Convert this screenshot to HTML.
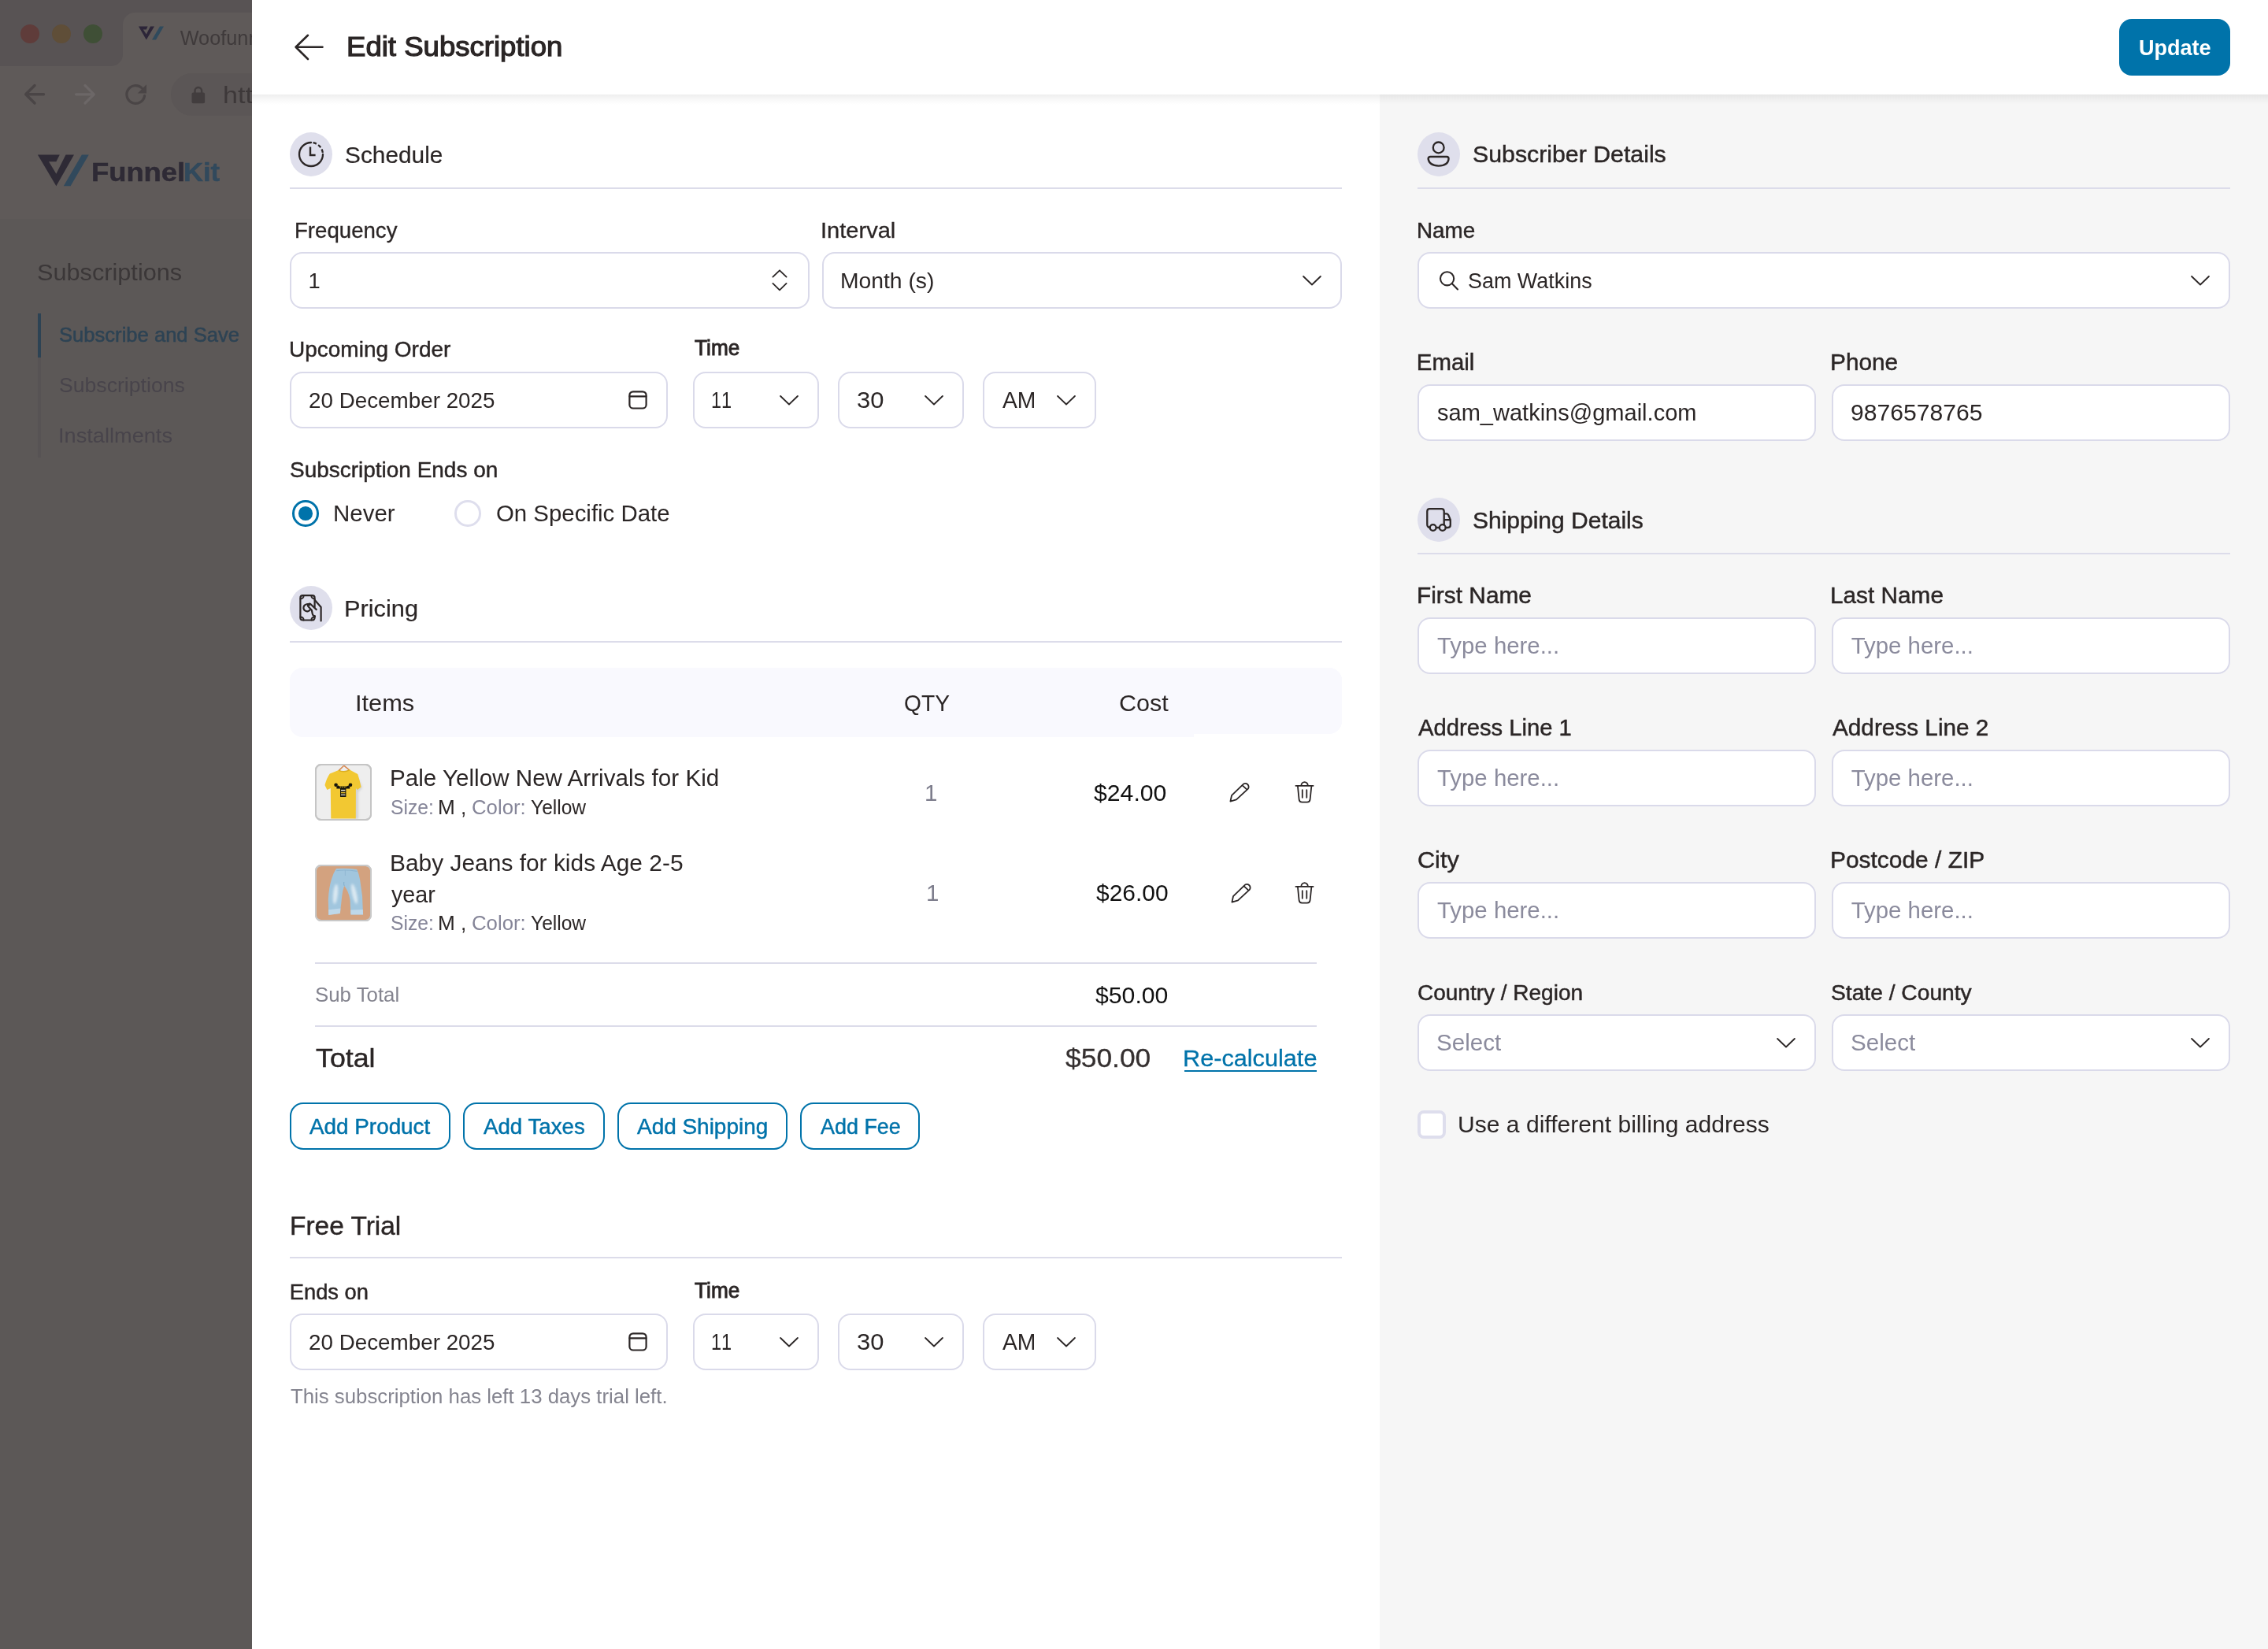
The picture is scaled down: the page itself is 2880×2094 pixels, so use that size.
<!DOCTYPE html>
<html lang="en"><head><meta charset="utf-8"><title>Edit Subscription</title>
<style>
html,body{margin:0;padding:0}
body{width:2880px;height:2094px;position:relative;overflow:hidden;background:#5c5857;font-family:"Liberation Sans",sans-serif}
@media (max-width:1600px){html{zoom:.5}}
.a{position:absolute}
svg{position:absolute;overflow:visible}
.t{position:absolute;white-space:nowrap;line-height:1;transform-origin:0 50%;-webkit-font-smoothing:antialiased}
.inp{position:absolute;box-sizing:border-box;height:72px;border:2px solid #dadaea;border-radius:16px;background:#fff}
.hr{position:absolute;height:2px;background:#dcdcea}
.ic{position:absolute;width:54px;height:56px;border-radius:50%;background:#dfdfec}
.btn{position:absolute;box-sizing:border-box;height:60px;top:1400px;border:2.5px solid #0073aa;border-radius:17px;background:#fff}
.k{fill:none;stroke:#2b2626;stroke-linecap:round;stroke-linejoin:round}
</style></head><body>

<!-- ================= dimmed browser / app behind the drawer ================= -->
<div class="a" style="left:0;top:0;width:320px;height:84px;background:#585354"></div>
<div class="a" style="left:0;top:84px;width:320px;height:194px;background:#5f5a59"></div>
<div class="a" style="left:156px;top:16px;width:170px;height:70px;background:#5f5a59;border-radius:15px 0 0 0"></div>
<svg style="left:141px;top:69px" width="15" height="15" viewBox="0 0 15 15"><path d="M15 0 V15 H0 A15 15 0 0 0 15 0Z" fill="#5f5a59"/></svg>
<div class="a" style="left:217px;top:93px;width:140px;height:54px;border-radius:27px;background:#5b5656"></div>
<div class="a" style="left:26px;top:31px;width:24px;height:24px;border-radius:50%;background:#5f3c3a"></div>
<div class="a" style="left:66px;top:31px;width:24px;height:24px;border-radius:50%;background:#5f4e38"></div>
<div class="a" style="left:106px;top:31px;width:24px;height:24px;border-radius:50%;background:#3f4f36"></div>
<!-- favicon -->
<svg style="left:176px;top:33px" width="33" height="19" viewBox="0 0 33 19">
<path d="M0 .6H20L9.8 17.6Z M11.6 .6H15L9.8 10.6 5.8 4.4H9.8Z" fill="#2c2538" fill-rule="evenodd"/>
<path d="M27 .6H32L22 17.6H17Z" fill="#2f4a5d"/></svg>
<!-- nav arrows, reload, lock -->
<svg style="left:28px;top:104px" width="100" height="32" viewBox="28 104 100 32">
<path d="M55.5 119.8H33 M44 108.5 32.7 119.8 44 131" fill="none" stroke="#4a4546" stroke-width="3.4" stroke-linecap="round" stroke-linejoin="round"/>
<path d="M96.5 119.8H119 M108 108.5 119.3 119.8 108 131" fill="none" stroke="#6c6767" stroke-width="3.2" stroke-linecap="round" stroke-linejoin="round"/></svg>
<svg style="left:156px;top:104px" width="34" height="34" viewBox="156 104 34 34">
<path d="M183.6 121.5A11.4 11.4 0 1 1 180 111.6" fill="none" stroke="#4a4546" stroke-width="3.2" stroke-linecap="round"/>
<path d="M186 107.3V118.6H174.8Z" fill="#4a4546"/></svg>
<svg style="left:243px;top:109px" width="18" height="23" viewBox="0 0 18 23">
<rect x=".5" y="8.6" width="16.6" height="13.6" rx="2" fill="#423d3e"/>
<path d="M4.5 9.5V6.3a4.3 4.3 0 0 1 8.6 0V9.5" fill="none" stroke="#423d3e" stroke-width="2.4"/></svg>
<!-- FunnelKit logo mark -->
<svg style="left:47px;top:196px" width="68" height="42" viewBox="47 196 68 42">
<path d="M47.9 196.4H94L71.4 236.3Z M75.8 196.4H83.5L71.4 220.8 62 205.2H71.4Z" fill="#2e2a35" fill-rule="evenodd"/>
<path d="M103.9 196.4H112.8L89.6 236.3H80.8Z" fill="#31495c"/></svg>
<!-- sidebar rail -->
<div class="a" style="left:48px;top:398px;width:4px;height:183px;background:#575354"></div>
<div class="a" style="left:48px;top:398px;width:4px;height:56px;background:#2d4354"></div>

<div class="a" style="left:0;top:0;width:320px;height:2094px;overflow:hidden;will-change:transform">
<div class="t" style="left:228.70px;top:36.48px;font-size:25.3px;color:#3f3a3b;">Woofunnels</div>
<div class="t" style="left:282.70px;top:106.65px;font-size:29.0px;color:#3d3839;transform:scaleX(1.1746);">htt</div>
<div class="t" style="left:116.10px;top:202.07px;font-size:33.0px;color:#2e2a35;font-weight:700;transform:scaleX(1.1011);-webkit-text-stroke:0.5px #2e2a35;">Funnel</div>
<div class="t" style="left:232.50px;top:202.07px;font-size:33.0px;color:#31495c;font-weight:700;transform:scaleX(1.0476);-webkit-text-stroke:0.5px #31495c;">Kit</div>
<div class="t" style="left:47.34px;top:332.45px;font-size:29.0px;color:#3b3738;transform:scaleX(1.0580);">Subscriptions</div>
<div class="t" style="left:75.42px;top:411.59px;font-size:26.0px;color:#2d4354;transform:scaleX(0.9842);-webkit-text-stroke:0.5px #2d4354;">Subscribe and Save</div>
<div class="t" style="left:75.38px;top:475.99px;font-size:26.0px;color:#48444b;transform:scaleX(1.0240);">Subscriptions</div>
<div class="t" style="left:74.31px;top:539.59px;font-size:26.0px;color:#48444b;transform:scaleX(1.0452);">Installments</div>
</div>

<!-- ================= drawer ================= -->
<div class="a" style="left:320px;top:0;width:1432px;height:2094px;background:#fff"></div>
<div class="a" style="left:1752px;top:0;width:1128px;height:2094px;background:#f6f6f6"></div>
<div class="a" style="left:320px;top:120px;width:2560px;height:13px;background:linear-gradient(rgba(0,0,0,.068),rgba(0,0,0,.025) 55%,rgba(0,0,0,0))"></div>
<div class="a" style="left:320px;top:0;width:2560px;height:120px;background:#fff"></div>
<svg style="left:370px;top:40px" width="44" height="40" viewBox="370 40 44 40"><path class="k" d="M409.5 59.8H376 M391 44.8 375.6 59.8 391 75" stroke-width="2.6"/></svg>
<div class="a" style="left:2691px;top:24px;width:141px;height:72px;border-radius:16px;background:#0073aa"></div>

<!-- ===== left column: schedule ===== -->
<div class="ic" style="left:368px;top:168px"></div>
<svg style="left:375px;top:176px" width="40" height="40" viewBox="375 176 40 40">
<path class="k" d="M410 196A15 15 0 1 1 395 181" stroke-width="2.3"/>
<path class="k" d="M395 181A15 15 0 0 1 410 196" stroke-width="2.3" stroke-dasharray="4.4 2.65" stroke-dashoffset="4.4" style="stroke-linecap:butt"/>
<path class="k" d="M394 186.6V197H400.6" stroke-width="2.4" style="stroke-linecap:butt;stroke-linejoin:miter"/></svg>
<div class="hr" style="left:368px;top:238px;width:1336px"></div>

<div class="inp" style="left:368px;top:320px;width:660px"></div>
<svg style="left:979px;top:341px" width="22" height="30" viewBox="979 341 22 30"><path class="k" d="M981.4 351.6 990 343.3 998.6 351.6 M981.4 359.9 990 368.4 998.6 359.9" stroke-width="1.8"/></svg>
<div class="inp" style="left:1044px;top:320px;width:660px"></div>
<svg style="left:1654px;top:349.8px" width="24" height="13" viewBox="0 0 24 13"><path class="k" d="M1.1 1 12 11.5 22.9 1" stroke-width="1.85"/></svg>

<div class="inp" style="left:368px;top:472px;width:480px"></div>
<svg style="left:797px;top:495px" width="26" height="26" viewBox="797 495 26 26"><rect class="k" x="799.4" y="497.3" width="21.2" height="21.2" rx="4.6" stroke-width="2.2"/><path class="k" d="M799.6 503.4H820.4" stroke-width="2.2"/></svg>
<div class="inp" style="left:880px;top:472px;width:160px"></div>
<svg style="left:990px;top:501.8px" width="24" height="13" viewBox="0 0 24 13"><path class="k" d="M1.1 1 12 11.5 22.9 1" stroke-width="1.85"/></svg>
<div class="inp" style="left:1064px;top:472px;width:160px"></div>
<svg style="left:1174.4px;top:501.8px" width="24" height="13" viewBox="0 0 24 13"><path class="k" d="M1.1 1 12 11.5 22.9 1" stroke-width="1.85"/></svg>
<div class="inp" style="left:1248px;top:472px;width:144px"></div>
<svg style="left:1342px;top:501.8px" width="24" height="13" viewBox="0 0 24 13"><path class="k" d="M1.1 1 12 11.5 22.9 1" stroke-width="1.85"/></svg>

<!-- radios -->
<div class="a" style="left:371.3px;top:635.3px;width:33.4px;height:33.4px;box-sizing:border-box;border:3.7px solid #0073aa;border-radius:50%;background:#fff"></div>
<div class="a" style="left:379.2px;top:643.2px;width:17.6px;height:17.6px;border-radius:50%;background:#0073aa"></div>
<div class="a" style="left:577.3px;top:635.3px;width:33.4px;height:33.4px;box-sizing:border-box;border:3.5px solid #dedeed;border-radius:50%;background:#fff"></div>

<!-- ===== pricing ===== -->
<div class="ic" style="left:368px;top:744px"></div>
<svg style="left:376px;top:750px" width="40" height="44" viewBox="376 750 40 44">
<path class="k" d="M399.6 771V759.2a3 3 0 0 0-3-3H384.4a3 3 0 0 0-3 3V784.5a3 3 0 0 0 3 3H396.6a3 3 0 0 0 3-3V782.6" stroke-width="2.2"/>
<path class="k" d="M381.6 760.4a4 4 0 0 0 4-4 M395.4 756.4a4 4 0 0 0 4 4 M381.6 783.4a4 4 0 0 1 4 4 M395.4 787.4a4 4 0 0 1 4-4" stroke-width="2"/>
<path class="k" d="M392.96 768.28A4.6 4.6 0 1 0 393.77 774.44" stroke-width="2.2"/>
<path class="k" d="M401.8 774.1 394.5 767.2A2.13 2.13 0 0 0 391.6 770.3L395.9 775 396.8 779.6Q397.3 782 400 782.4" stroke-width="2.2"/>
<path class="k" d="M399.8 762 407.6 771V788.4" stroke-width="2.2"/></svg>
<div class="hr" style="left:368px;top:813.6px;width:1336px"></div>

<div class="a" style="left:368px;top:848px;width:1336px;height:88px;border-radius:16px;background:#f9f9fe"></div>
<div class="a" style="left:1516px;top:920px;width:188px;height:16px;background:#fff"></div>
<div class="a" style="left:1516px;top:848px;width:188px;height:84px;border-radius:0 16px 16px 0;background:#f9f9fe"></div>

<!-- thumbnails -->
<svg style="left:400px;top:970px" width="72" height="72" viewBox="0 0 72 72">
<defs><filter id="bl1" x="-30%" y="-30%" width="160%" height="160%"><feGaussianBlur stdDeviation="1.6"/></filter>
<filter id="bl0" x="-30%" y="-30%" width="160%" height="160%"><feGaussianBlur stdDeviation=".45"/></filter>
<clipPath id="tc"><rect x="2" y="2" width="68" height="68" rx="5.5"/></clipPath></defs>
<rect x="1" y="1" width="70" height="70" rx="6.6" fill="#eeeeee" stroke="#c5c5c5" stroke-width="2"/>
<g clip-path="url(#tc)">
<path d="M53 14 60 30 55 36 55 70H50V14Z" fill="#d3d3d3" filter="url(#bl1)"/>
<g filter="url(#bl0)">
<path d="M30.4 8.4 36.7 2.2 43.6 7.8" fill="none" stroke="#d8874f" stroke-width="1.5" stroke-linecap="round" stroke-linejoin="round"/>
<path d="M30 8.1Q36.7 11.6 44 7.6L54.2 13Q56.6 20 58.6 29.5L53.7 32.9 51.9 30.8 51.8 69.6H20.3L19.8 30.9 15.4 32.9 12.5 27Q14.8 18 18.8 12.5Z" fill="#f2c830"/>
<path d="M30 8.1Q36.7 11.6 44 7.6" fill="none" stroke="#dcae22" stroke-width="1.3"/>
<path d="M27.4 28.4H44.2V31.6H39.4V42H32V31.6H27.4Z" fill="#14120b"/>
<circle cx="26.6" cy="26.8" r="2.3" fill="#14120b"/><circle cx="45" cy="26.8" r="2.3" fill="#14120b"/>
<path d="M28.6 28 31 30 M43 28 40.6 30" stroke="#14120b" stroke-width="2"/>
<path d="M33 33.6H38.4" stroke="#e9e4d0" stroke-width="1.5"/><path d="M33 36.6H38.4" stroke="#e3bd2c" stroke-width="1.5"/><path d="M33 39.4H38.4" stroke="#e9e4d0" stroke-width="1.3"/>
<path d="M31.6 29.7H40" stroke="#f2c830" stroke-width=".9" stroke-dasharray="1.6 1.1"/>
</g></g>
<rect x="1" y="1" width="70" height="70" rx="6.6" fill="none" stroke="#c5c5c5" stroke-width="2"/></svg>
<svg style="left:400px;top:1098px" width="72" height="72" viewBox="0 0 72 72">
<defs><filter id="bl2" x="-40%" y="-20%" width="180%" height="140%"><feGaussianBlur stdDeviation="1.5"/></filter>
<clipPath id="jc"><rect x="2" y="2" width="68" height="68" rx="5.5"/></clipPath></defs>
<rect x="1" y="1" width="70" height="70" rx="6.6" fill="#d3a27f" stroke="#c8c8c8" stroke-width="2"/>
<g clip-path="url(#jc)"><g filter="url(#bl0)">
<path d="M27 5Q40 4 53.2 6Q56 12 57.1 19.1L60 39.5 61 63.3 45.5 63.3 44.5 44.3Q42.5 33 37.2 26.9 35.2 32 34.3 39.5L31.9 61.8 17.3 63.7 16.8 44.3Q17.6 29 21.2 17.7 23.6 10 27 5Z" fill="#a1c6de"/>
<path d="M17.2 57.2 32.3 55.6 31.9 62 17.3 63.9Z M45.2 57.6 60.8 57 61.1 63.4 45.5 63.5Z" fill="#bed8ea"/>
<path d="M27.2 7.6Q40 6.2 53.4 8.4" fill="none" stroke="#8db5d1" stroke-width="1.1"/>
<path d="M38.4 7V14" stroke="#8db5d1" stroke-width=".8"/>
<path d="M37.2 26.9Q36.2 24.6 36.8 22" fill="none" stroke="#7ea9c7" stroke-width=".9"/>
</g>
<ellipse cx="26" cy="37.4" rx="2.9" ry="12.6" transform="rotate(6 26 37.4)" fill="#e6f0f6" opacity=".85" filter="url(#bl2)"/>
<ellipse cx="50" cy="37" rx="2.9" ry="13" transform="rotate(-13 50 37)" fill="#e6f0f6" opacity=".85" filter="url(#bl2)"/>
</g>
<rect x="1" y="1" width="70" height="70" rx="6.6" fill="none" stroke="#c8c8c8" stroke-width="2"/></svg>

<!-- row action icons -->
<svg style="left:1558px;top:990px" width="32" height="32" viewBox="1558 990 32 32"><path class="k" d="M1562.4 1017.6 1564 1010.2 1578.2 996.4A4.2 4.2 0 0 1 1584.6 1001.9L1570 1015.4Z M1578 997.6 1582.6 1001.8" stroke-width="1.8"/></svg>
<svg style="left:1642px;top:990px" width="30" height="32" viewBox="1642 990 30 32"><path class="k" d="M1645.4 997.8H1667.6 M1652.4 997.6A4.2 4.4 0 0 1 1660.8 997.6 M1647.9 998 1649.6 1015.2Q1650 1018.6 1653.4 1018.6H1659.8Q1663.2 1018.6 1663.6 1015.2L1665.4 998 M1653.8 1003.2V1012.8 M1659.3 1003.2V1012.8" stroke-width="1.8"/></svg>
<svg style="left:1559.5px;top:1118px" width="32" height="32" viewBox="1558 990 32 32"><path class="k" d="M1562.4 1017.6 1564 1010.2 1578.2 996.4A4.2 4.2 0 0 1 1584.6 1001.9L1570 1015.4Z M1578 997.6 1582.6 1001.8" stroke-width="1.8"/></svg>
<svg style="left:1642px;top:1118px" width="30" height="32" viewBox="1642 990 30 32"><path class="k" d="M1645.4 997.8H1667.6 M1652.4 997.6A4.2 4.4 0 0 1 1660.8 997.6 M1647.9 998 1649.6 1015.2Q1650 1018.6 1653.4 1018.6H1659.8Q1663.2 1018.6 1663.6 1015.2L1665.4 998 M1653.8 1003.2V1012.8 M1659.3 1003.2V1012.8" stroke-width="1.8"/></svg>

<div class="hr" style="left:400px;top:1222px;width:1272px"></div>
<div class="hr" style="left:400px;top:1301.6px;width:1272px"></div>
<div class="a" style="left:1504px;top:1359px;width:168px;height:2px;background:#0073aa"></div>

<div class="btn" style="left:368px;width:204px"></div>
<div class="btn" style="left:588px;width:180px"></div>
<div class="btn" style="left:784px;width:216px"></div>
<div class="btn" style="left:1016px;width:152px"></div>

<!-- ===== free trial ===== -->
<div class="hr" style="left:368px;top:1595.6px;width:1336px"></div>
<div class="inp" style="left:368px;top:1668px;width:480px"></div>
<svg style="left:797px;top:1691px" width="26" height="26" viewBox="797 495 26 26"><rect class="k" x="799.4" y="497.3" width="21.2" height="21.2" rx="4.6" stroke-width="2.2"/><path class="k" d="M799.6 503.4H820.4" stroke-width="2.2"/></svg>
<div class="inp" style="left:880px;top:1668px;width:160px"></div>
<svg style="left:990px;top:1697.8px" width="24" height="13" viewBox="0 0 24 13"><path class="k" d="M1.1 1 12 11.5 22.9 1" stroke-width="1.85"/></svg>
<div class="inp" style="left:1064px;top:1668px;width:160px"></div>
<svg style="left:1174.4px;top:1697.8px" width="24" height="13" viewBox="0 0 24 13"><path class="k" d="M1.1 1 12 11.5 22.9 1" stroke-width="1.85"/></svg>
<div class="inp" style="left:1248px;top:1668px;width:144px"></div>
<svg style="left:1342px;top:1697.8px" width="24" height="13" viewBox="0 0 24 13"><path class="k" d="M1.1 1 12 11.5 22.9 1" stroke-width="1.85"/></svg>
<!-- ===== right column ===== -->
<div class="ic" style="left:1800px;top:168px"></div>
<svg style="left:1808px;top:176px" width="40" height="40" viewBox="1808 176 40 40">
<circle class="k" cx="1826.7" cy="187.4" r="6.9" stroke-width="2.3"/>
<path class="k" d="M1816.4 199H1837.2Q1839.7 199.2 1839.6 201.8 1838.6 210.4 1826.8 210.6 1815 210.4 1813.6 201.8 1813.6 199.2 1816.4 199Z" stroke-width="2.3"/></svg>
<div class="hr" style="left:1800px;top:238px;width:1032px"></div>

<div class="inp" style="left:1800px;top:320px;width:1032px"></div>
<svg style="left:1826px;top:342px" width="28" height="28" viewBox="1826 342 28 28"><circle class="k" cx="1837.6" cy="353.8" r="8.6" stroke-width="2.1"/><path class="k" d="M1843.9 360.2 1851 367.4" stroke-width="2.1"/></svg>
<svg style="left:2782px;top:349.8px" width="24" height="13" viewBox="0 0 24 13"><path class="k" d="M1.1 1 12 11.5 22.9 1" stroke-width="1.85"/></svg>

<div class="inp" style="left:1800px;top:488px;width:506px"></div>
<div class="inp" style="left:2326px;top:488px;width:506px"></div>

<div class="ic" style="left:1800px;top:632px"></div>
<svg style="left:1808px;top:640px" width="40" height="40" viewBox="1808 640 40 40">
<path class="k" d="M1816 670Q1812.3 669.6 1812.3 666V649.4Q1812.3 646.2 1815.5 646.2H1830.5Q1833.7 646.2 1833.7 649.4V666.2 M1823.8 670H1827.8 M1835.8 670H1838.6Q1841.8 670 1841.8 666.8V660.8Q1841.8 659.8 1841.4 659L1839.2 654Q1838.4 652.4 1836.6 652.4H1833.9 M1833.9 660.2H1841.6" stroke-width="2.3"/>
<circle class="k" cx="1819.7" cy="670" r="3.9" stroke-width="2.3"/><circle class="k" cx="1831.8" cy="670" r="3.9" stroke-width="2.3"/></svg>
<div class="hr" style="left:1800px;top:701.6px;width:1032px"></div>

<div class="inp" style="left:1800px;top:784px;width:506px"></div>
<div class="inp" style="left:2326px;top:784px;width:506px"></div>
<div class="inp" style="left:1800px;top:952px;width:506px"></div>
<div class="inp" style="left:2326px;top:952px;width:506px"></div>
<div class="inp" style="left:1800px;top:1120px;width:506px"></div>
<div class="inp" style="left:2326px;top:1120px;width:506px"></div>
<div class="inp" style="left:1800px;top:1288px;width:506px"></div>
<div class="inp" style="left:2326px;top:1288px;width:506px"></div>
<svg style="left:2256px;top:1317.8px" width="24" height="13" viewBox="0 0 24 13"><path class="k" d="M1.1 1 12 11.5 22.9 1" stroke-width="1.85"/></svg>
<svg style="left:2782px;top:1317.8px" width="24" height="13" viewBox="0 0 24 13"><path class="k" d="M1.1 1 12 11.5 22.9 1" stroke-width="1.85"/></svg>

<div class="a" style="left:1800px;top:1410px;width:36px;height:36px;box-sizing:border-box;border:4px solid #dedeed;border-radius:8px;background:#fff"></div>


<div class="a" style="left:0;top:0;width:2880px;height:2094px;will-change:transform">
<div class="t" style="left:439.53px;top:42.03px;font-size:35.4px;color:#2b2626;transform:scaleX(1.0333);-webkit-text-stroke:1.25px #2b2626;">Edit Subscription</div>
<div class="t" style="left:2715.61px;top:47.29px;font-size:27.3px;color:#ffffff;font-weight:700;transform:scaleX(0.9898);">Update</div>
<div class="t" style="left:437.99px;top:181.51px;font-size:29.4px;color:#2b2626;transform:scaleX(1.0148);-webkit-text-stroke:0.2px #2b2626;">Schedule</div>
<div class="t" style="left:374.48px;top:278.89px;font-size:27.3px;color:#2b2626;transform:scaleX(1.0116);-webkit-text-stroke:0.3px #2b2626;">Frequency</div>
<div class="t" style="left:1042.37px;top:278.69px;font-size:27.3px;color:#2b2626;transform:scaleX(1.0642);-webkit-text-stroke:0.3px #2b2626;">Interval</div>
<div class="t" style="left:391.50px;top:342.89px;font-size:27.3px;color:#2b2626;">1</div>
<div class="t" style="left:1066.93px;top:342.89px;font-size:27.3px;color:#2b2626;transform:scaleX(1.0358);">Month (s)</div>
<div class="t" style="left:366.55px;top:429.89px;font-size:27.3px;color:#2b2626;transform:scaleX(1.0254);-webkit-text-stroke:0.45px #2b2626;">Upcoming Order</div>
<div class="t" style="left:881.50px;top:428.29px;font-size:27.3px;color:#2b2626;transform:scaleX(0.9613);-webkit-text-stroke:0.9px #2b2626;">Time</div>
<div class="t" style="left:391.98px;top:495.19px;font-size:27.3px;color:#2b2626;transform:scaleX(1.0187);">20 December 2025</div>
<div class="t" style="left:903.40px;top:493.01px;font-size:29.4px;color:#2b2626;transform:scaleX(0.8008);font-kerning:none;">11</div>
<div class="t" style="left:1088.45px;top:493.01px;font-size:29.4px;color:#2b2626;transform:scaleX(1.0528);">30</div>
<div class="t" style="left:1273.00px;top:493.01px;font-size:29.4px;color:#2b2626;transform:scaleX(0.9624);">AM</div>
<div class="t" style="left:367.58px;top:583.29px;font-size:27.3px;color:#2b2626;transform:scaleX(1.0243);-webkit-text-stroke:0.45px #2b2626;">Subscription Ends on</div>
<div class="t" style="left:423.00px;top:637.11px;font-size:29.4px;color:#2b2626;transform:scaleX(1.0025);">Never</div>
<div class="t" style="left:630.00px;top:637.11px;font-size:29.4px;color:#2b2626;font-variant-ligatures:none;">On Specific Date</div>
<div class="t" style="left:436.91px;top:758.11px;font-size:29.4px;color:#2b2626;transform:scaleX(1.0464);-webkit-text-stroke:0.2px #2b2626;">Pricing</div>
<div class="t" style="left:450.61px;top:877.51px;font-size:29.4px;color:#2b2626;transform:scaleX(1.0469);">Items</div>
<div class="t" style="left:1147.64px;top:877.51px;font-size:29.4px;color:#2b2626;transform:scaleX(0.9590);">QTY</div>
<div class="t" style="left:1420.96px;top:877.51px;font-size:29.4px;color:#2b2626;transform:scaleX(1.0377);">Cost</div>
<div class="t" style="left:494.78px;top:973.41px;font-size:29.4px;color:#2b2626;transform:scaleX(1.0079);">Pale Yellow New Arrivals for Kid</div>
<div class="t" style="left:495.92px;top:1012.67px;font-size:25.2px;color:#858598;transform:scaleX(0.9793);">Size:</div>
<div class="t" style="left:556.22px;top:1012.67px;font-size:25.2px;color:#2b2626;transform:scaleX(1.0394);">M ,</div>
<div class="t" style="left:598.58px;top:1012.67px;font-size:25.2px;color:#858598;transform:scaleX(1.0220);">Color:</div>
<div class="t" style="left:673.60px;top:1012.67px;font-size:25.2px;color:#2b2626;transform:scaleX(0.9753);">Yellow</div>
<div class="t" style="left:495.92px;top:1160.47px;font-size:25.2px;color:#858598;transform:scaleX(0.9793);">Size:</div>
<div class="t" style="left:556.22px;top:1160.47px;font-size:25.2px;color:#2b2626;transform:scaleX(1.0394);">M ,</div>
<div class="t" style="left:598.58px;top:1160.47px;font-size:25.2px;color:#858598;transform:scaleX(1.0220);">Color:</div>
<div class="t" style="left:673.60px;top:1160.47px;font-size:25.2px;color:#2b2626;transform:scaleX(0.9753);">Yellow</div>
<div class="t" style="left:1174.00px;top:991.81px;font-size:29.4px;color:#7d7d8c;">1</div>
<div class="t" style="left:1389.00px;top:991.81px;font-size:29.4px;color:#111111;transform:scaleX(1.0274);">$24.00</div>
<div class="t" style="left:494.76px;top:1081.11px;font-size:29.4px;color:#2b2626;transform:scaleX(1.0180);">Baby Jeans for kids Age 2-5</div>
<div class="t" style="left:496.80px;top:1121.11px;font-size:29.4px;color:#2b2626;transform:scaleX(0.9758);">year</div>
<div class="t" style="left:1176.00px;top:1119.11px;font-size:29.4px;color:#7d7d8c;">1</div>
<div class="t" style="left:1391.80px;top:1119.11px;font-size:29.4px;color:#111111;transform:scaleX(1.0184);">$26.00</div>
<div class="t" style="left:399.97px;top:1251.07px;font-size:25.2px;color:#84848f;transform:scaleX(1.0252);">Sub Total</div>
<div class="t" style="left:1391.00px;top:1248.81px;font-size:29.4px;color:#111111;transform:scaleX(1.0274);">$50.00</div>
<div class="t" style="left:401.00px;top:1327.16px;font-size:33.6px;color:#2b2626;transform:scaleX(1.0653);-webkit-text-stroke:0.45px #2b2626;">Total</div>
<div class="t" style="left:1353.40px;top:1327.16px;font-size:33.6px;color:#353030;transform:scaleX(1.0546);-webkit-text-stroke:0.3px #353030;">$50.00</div>
<div class="t" style="left:1501.91px;top:1328.71px;font-size:29.4px;color:#0073aa;transform:scaleX(1.0434);-webkit-text-stroke:0.3px #0073aa;">Re-calculate</div>
<div class="t" style="left:393.30px;top:1416.59px;font-size:27.3px;color:#0073aa;transform:scaleX(1.0203);-webkit-text-stroke:0.45px #0073aa;">Add Product</div>
<div class="t" style="left:613.60px;top:1416.59px;font-size:27.3px;color:#0073aa;transform:scaleX(1.0141);-webkit-text-stroke:0.45px #0073aa;">Add Taxes</div>
<div class="t" style="left:809.40px;top:1416.59px;font-size:27.3px;color:#0073aa;transform:scaleX(1.0235);-webkit-text-stroke:0.45px #0073aa;">Add Shipping</div>
<div class="t" style="left:1041.60px;top:1416.59px;font-size:27.3px;color:#0073aa;transform:scaleX(0.9862);-webkit-text-stroke:0.45px #0073aa;">Add Fee</div>
<div class="t" style="left:368.01px;top:1539.86px;font-size:33.6px;color:#2b2626;transform:scaleX(0.9960);-webkit-text-stroke:0.45px #2b2626;">Free Trial</div>
<div class="t" style="left:367.80px;top:1627.09px;font-size:27.3px;color:#2b2626;-webkit-text-stroke:0.45px #2b2626;">Ends on</div>
<div class="t" style="left:881.50px;top:1624.69px;font-size:27.3px;color:#2b2626;transform:scaleX(0.9613);-webkit-text-stroke:0.9px #2b2626;">Time</div>
<div class="t" style="left:391.98px;top:1691.19px;font-size:27.3px;color:#2b2626;transform:scaleX(1.0187);">20 December 2025</div>
<div class="t" style="left:903.40px;top:1689.01px;font-size:29.4px;color:#2b2626;transform:scaleX(0.8008);font-kerning:none;">11</div>
<div class="t" style="left:1088.45px;top:1689.01px;font-size:29.4px;color:#2b2626;transform:scaleX(1.0528);">30</div>
<div class="t" style="left:1273.00px;top:1689.01px;font-size:29.4px;color:#2b2626;transform:scaleX(0.9624);">AM</div>
<div class="t" style="left:369.00px;top:1760.67px;font-size:25.2px;color:#84848f;transform:scaleX(1.0235);">This subscription has left 13 days trial left.</div>
<div class="t" style="left:1869.67px;top:181.11px;font-size:29.4px;color:#2b2626;transform:scaleX(1.0305);-webkit-text-stroke:0.45px #2b2626;">Subscriber Details</div>
<div class="t" style="left:1798.76px;top:279.39px;font-size:27.3px;color:#2b2626;transform:scaleX(1.0196);-webkit-text-stroke:0.45px #2b2626;">Name</div>
<div class="t" style="left:1864.01px;top:343.19px;font-size:27.3px;color:#2b2626;transform:scaleX(0.9866);">Sam Watkins</div>
<div class="t" style="left:1798.80px;top:444.91px;font-size:29.4px;color:#2b2626;-webkit-text-stroke:0.45px #2b2626;">Email</div>
<div class="t" style="left:2324.47px;top:444.91px;font-size:29.4px;color:#2b2626;transform:scaleX(1.0140);-webkit-text-stroke:0.45px #2b2626;">Phone</div>
<div class="t" style="left:1825.00px;top:508.51px;font-size:29.4px;color:#2b2626;transform:scaleX(0.9875);">sam_watkins@gmail.com</div>
<div class="t" style="left:2349.68px;top:508.51px;font-size:29.4px;color:#2b2626;transform:scaleX(1.0240);">9876578765</div>
<div class="t" style="left:1869.58px;top:645.51px;font-size:29.4px;color:#2b2626;transform:scaleX(1.0204);-webkit-text-stroke:0.45px #2b2626;">Shipping Details</div>
<div class="t" style="left:1798.77px;top:741.01px;font-size:29.4px;color:#2b2626;transform:scaleX(1.0159);-webkit-text-stroke:0.45px #2b2626;">First Name</div>
<div class="t" style="left:2324.47px;top:741.01px;font-size:29.4px;color:#2b2626;transform:scaleX(1.0131);-webkit-text-stroke:0.45px #2b2626;">Last Name</div>
<div class="t" style="left:1800.80px;top:908.81px;font-size:29.4px;color:#2b2626;transform:scaleX(0.9938);-webkit-text-stroke:0.45px #2b2626;">Address Line 1</div>
<div class="t" style="left:2326.50px;top:908.81px;font-size:29.4px;color:#2b2626;transform:scaleX(1.0117);-webkit-text-stroke:0.45px #2b2626;">Address Line 2</div>
<div class="t" style="left:1799.76px;top:1077.11px;font-size:29.4px;color:#2b2626;transform:scaleX(1.0417);-webkit-text-stroke:0.45px #2b2626;">City</div>
<div class="t" style="left:2324.46px;top:1077.11px;font-size:29.4px;color:#2b2626;transform:scaleX(1.0176);-webkit-text-stroke:0.45px #2b2626;">Postcode / ZIP</div>
<div class="t" style="left:1799.77px;top:1247.19px;font-size:27.3px;color:#2b2626;transform:scaleX(1.0254);-webkit-text-stroke:0.45px #2b2626;">Country / Region</div>
<div class="t" style="left:2325.47px;top:1247.19px;font-size:27.3px;color:#2b2626;transform:scaleX(1.0329);-webkit-text-stroke:0.45px #2b2626;">State / County</div>
<div class="t" style="left:1825.00px;top:804.81px;font-size:29.4px;color:#8b8b9d;">Type here...</div>
<div class="t" style="left:2350.70px;top:804.81px;font-size:29.4px;color:#8b8b9d;">Type here...</div>
<div class="t" style="left:1825.00px;top:972.81px;font-size:29.4px;color:#8b8b9d;">Type here...</div>
<div class="t" style="left:2350.70px;top:972.81px;font-size:29.4px;color:#8b8b9d;">Type here...</div>
<div class="t" style="left:1825.00px;top:1140.81px;font-size:29.4px;color:#8b8b9d;">Type here...</div>
<div class="t" style="left:2350.70px;top:1140.81px;font-size:29.4px;color:#8b8b9d;">Type here...</div>
<div class="t" style="left:1823.99px;top:1308.71px;font-size:29.4px;color:#8b8b9d;transform:scaleX(1.0060);">Select</div>
<div class="t" style="left:2349.69px;top:1308.71px;font-size:29.4px;color:#8b8b9d;transform:scaleX(1.0060);">Select</div>
<div class="t" style="left:1850.95px;top:1412.71px;font-size:29.4px;color:#2b2626;transform:scaleX(1.0235);">Use a different billing address</div>
</div>
</body></html>
